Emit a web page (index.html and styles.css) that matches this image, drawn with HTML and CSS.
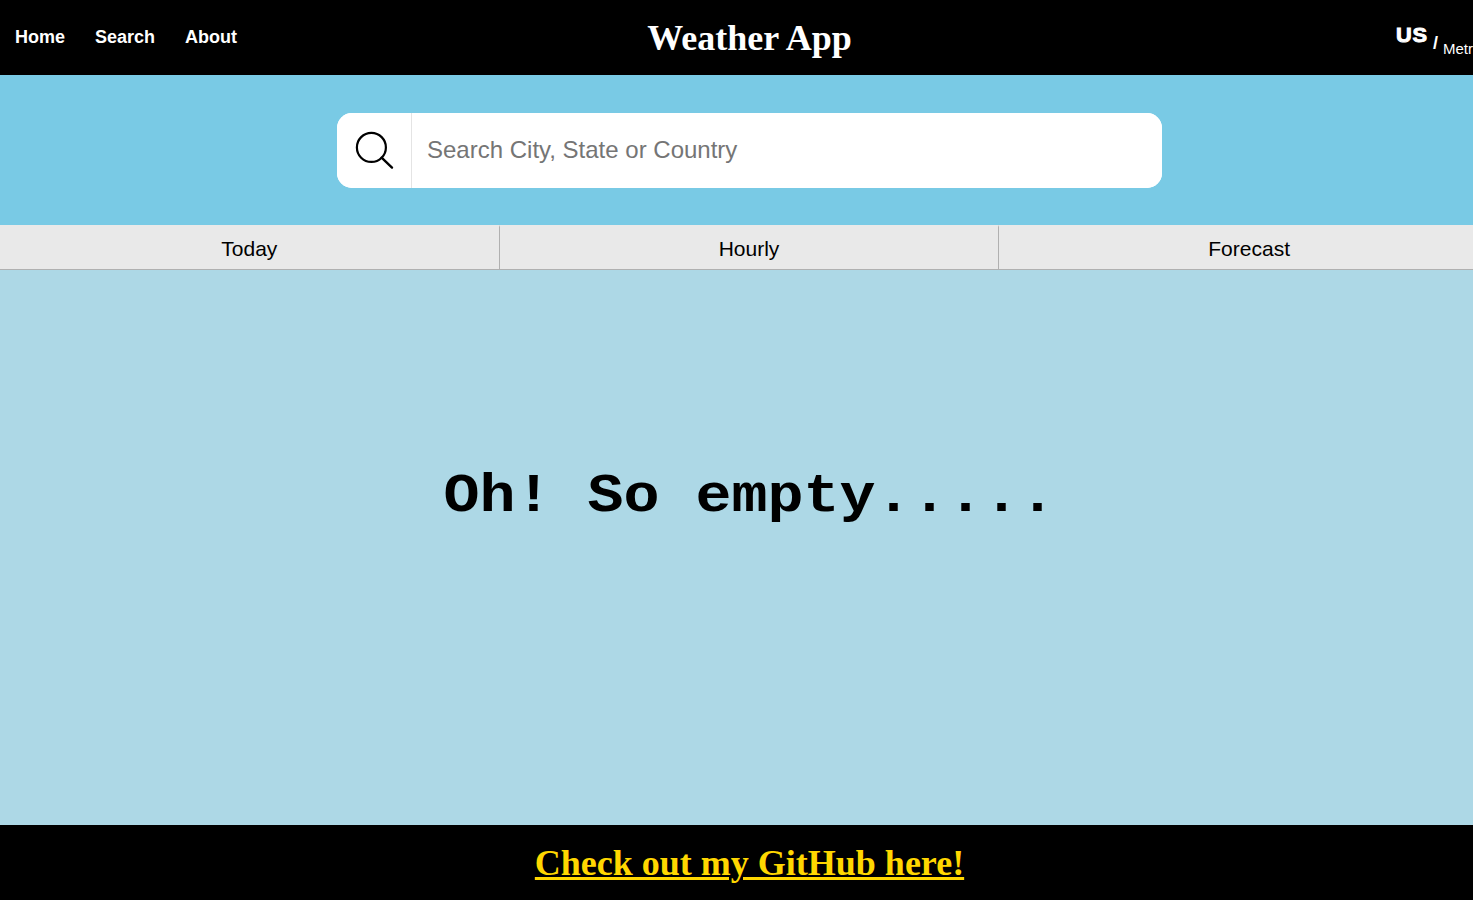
FILE: index.html
```html
<!DOCTYPE html>
<html lang="en">
<head>
<meta charset="utf-8">
<title>Weather App</title>
<link rel="stylesheet" href="styles.css">
</head>
<body>
<div class="page">
  <header class="header">
    <nav class="nav"><a href="#">Home</a><a href="#">Search</a><a href="#">About</a></nav>
    <h1 class="title">Weather App</h1>
    <div class="units"><span class="unit-active">US</span><span class="slash">/</span><span class="unit">Metric</span></div>
  </header>
  <section class="search-area">
    <form class="search">
      <button class="search-button" type="button" aria-label="Search">
        <svg width="40" height="40" viewBox="0 0 40 40" fill="none" stroke="#000" stroke-linecap="round">
          <circle cx="17.4" cy="17.4" r="14.5" stroke-width="2.2"/>
          <path d="M27.6 27.7L38 37.6" stroke-width="2.4"/>
        </svg>
      </button>
      <input class="search-input" type="text" placeholder="Search City, State or Country">
    </form>
  </section>
  <div class="tabs">
    <button class="tab">Today</button><button class="tab">Hourly</button><button class="tab">Forecast</button>
  </div>
  <main class="main"><p class="empty">Oh! So empty.....</p></main>
  <footer class="footer"><a class="footer-link" href="#">Check out my GitHub here!</a></footer>
</div>
</body>
</html>
```

FILE: styles.css
```css
* { box-sizing: border-box; }
html, body { margin: 0; height: 100%; overflow: hidden; background: #000; }
.page {
  width: 1499px;
  height: 900px;
  display: grid;
  grid-template-rows: 75px 150px 45px 555px 75px;
  font-family: "Liberation Sans", Arial, sans-serif;
}
.header {
  display: grid;
  grid-template-columns: 1fr auto 1fr;
  background: #000;
  color: #fff;
}
.nav { display: flex; gap: 30px; padding: 27px 0 0 15px; font-size: 18px; font-weight: bold; line-height: 21px; }
.nav a { color: #fff; text-decoration: none; }
.title { margin: 0; padding-top: 18px; font: bold 36px/41px "Liberation Serif", "Times New Roman", serif; }
.units { display: flex; align-items: flex-start; justify-self: end; width: 103px; white-space: nowrap; }
.unit-active { width: 37px; padding-top: 23px; font-size: 20px; font-weight: bold; line-height: 25px; -webkit-text-stroke: 0.9px #fff; letter-spacing: 0.8px; transform: scaleX(1.09); transform-origin: left; }
.slash { width: 10px; padding-top: 33px; font-size: 18px; font-weight: bold; line-height: 21px; }
.unit { padding-top: 40px; font-size: 15px; line-height: 17px; }
.search-area { display: flex; justify-content: center; align-items: center; background: #79cae5; }
.search { display: flex; width: 825px; height: 75px; border-radius: 15px; overflow: hidden; background: #fff; }
.search-button { display: flex; width: 75px; padding: 17px 0 0 17px; border: 0; border-right: 1px solid #e4e4e4; background: #fff; }
.search-input { flex: 1; min-width: 0; padding: 0 15px; border: 0; outline: 0; background: #fff; font: 24px "Liberation Sans", Arial, sans-serif; }
.search-input::placeholder { color: #757575; }
.tabs { display: grid; grid-template-columns: repeat(3, 1fr); }
.tab {
  padding: 2px 0 0;
  border: solid #b0b0b0;
  border-width: 2px 1px 1px 0;
  border-top-color: #e9e9e9;
  background: #e9e9e9;
  color: #000;
  font: 21px "Liberation Sans", Arial, sans-serif;
}
.tab:last-child { border-right: 0; }
.main { display: flex; justify-content: center; align-items: flex-start; background: #add8e6; }
.empty { margin: 0; padding-top: 191px; font: bold 60px/68px "Courier New", "Liberation Mono", monospace; transform: scaleY(0.89); transform-origin: 0 243px; }
.footer { display: flex; justify-content: center; align-items: flex-start; padding-top: 18px; background: #000; }
.footer-link { color: #ffd700; font: bold 36px/41px "Liberation Serif", "Times New Roman", serif; text-decoration-thickness: 3px; }
```
